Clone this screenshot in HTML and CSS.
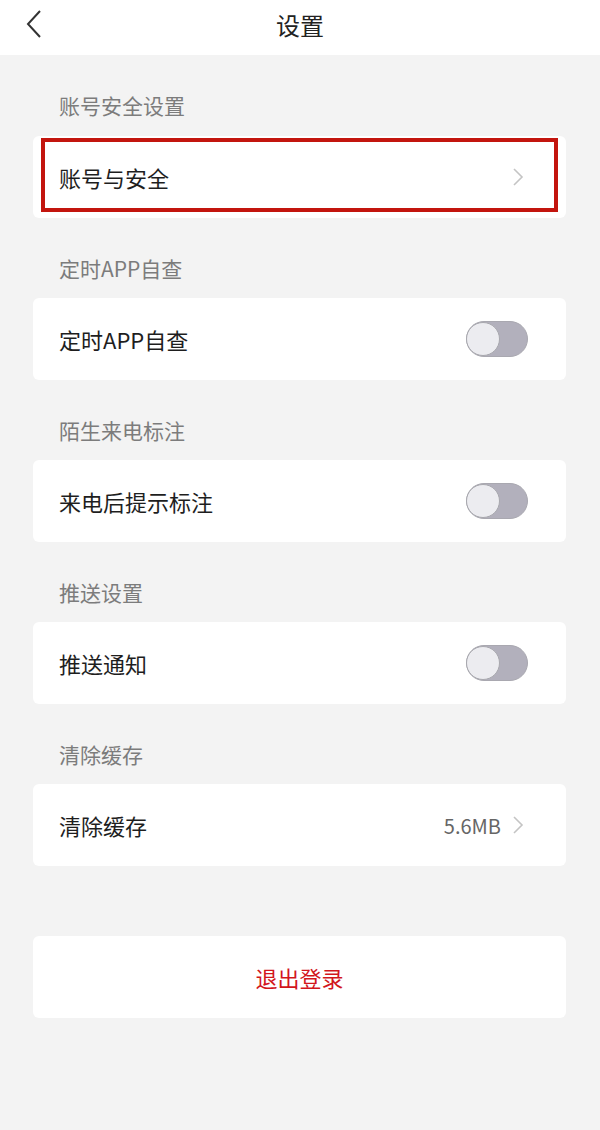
FILE: index.html
```html
<!DOCTYPE html>
<html lang="zh-CN">
<head>
<meta charset="utf-8">
<title>设置</title>
<link rel="stylesheet" href="styles.css">
</head>
<body>
<header class="topbar">
  <svg class="back" width="18" height="30" viewBox="0 0 18 30"><path d="M15 2 L3 15 L15 28" fill="none" stroke="#333" stroke-width="2"/></svg>
  <h1 class="title">设置</h1>
</header>
<main class="content">
  <section class="group">
    <div class="label">账号安全设置</div>
    <div class="card">
      <span class="item">账号与安全</span>
      <svg class="chev" width="12" height="20" viewBox="0 0 12 20"><path d="M2 2 L10 10 L2 18" fill="none" stroke="#c4c4c4" stroke-width="1.6"/></svg>
      <div class="highlight"></div>
    </div>
  </section>
  <section class="group">
    <div class="label">定时APP自查</div>
    <div class="card">
      <span class="item">定时APP自查</span>
      <span class="switch"><span class="knob"></span></span>
    </div>
  </section>
  <section class="group">
    <div class="label">陌生来电标注</div>
    <div class="card">
      <span class="item">来电后提示标注</span>
      <span class="switch"><span class="knob"></span></span>
    </div>
  </section>
  <section class="group">
    <div class="label">推送设置</div>
    <div class="card">
      <span class="item">推送通知</span>
      <span class="switch"><span class="knob"></span></span>
    </div>
  </section>
  <section class="group">
    <div class="label">清除缓存</div>
    <div class="card">
      <span class="item">清除缓存</span>
      <span class="value">5.6MB</span>
      <svg class="chev" width="12" height="20" viewBox="0 0 12 20"><path d="M2 2 L10 10 L2 18" fill="none" stroke="#c4c4c4" stroke-width="1.6"/></svg>
    </div>
  </section>
  <div class="card logout">退出登录</div>
</main>
</body>
</html>
```
FILE: styles.css
```css
* { box-sizing: border-box; }
html, body { margin: 0; padding: 0; }
body {
  width: 600px;
  min-height: 1130px;
  background: #f3f3f3;
  font-family: "Noto Sans CJK SC", "Noto Sans", sans-serif;
}
.topbar {
  height: 55px;
  background: #fff;
  display: flex;
  align-items: center;
  justify-content: center;
  position: relative;
}
.back {
  position: absolute;
  left: 25px;
  top: 9px;
}
.title {
  margin: 0;
  font-size: 24px;
  font-weight: 400;
  color: #222;
  line-height: 30px;
  margin-top: -6px;
}
.content {
  padding: 0 34px 0 33px;
}
.label {
  height: 81px;
  padding: 38px 0 0 26px;
  font-size: 21px;
  line-height: 24px;
  color: #7c7c7c;
  font-weight: 400;
}
.group + .group .label { height: 80px; }
.card {
  position: relative;
  height: 82px;
  background: #fff;
  border-radius: 6px;
  display: flex;
  align-items: center;
  padding: 0 38px 0 26px;
}
.item {
  flex: 1;
  font-size: 22px;
  color: #1e1e1e;
  line-height: 28px;
}
.value {
  font-size: 20px;
  color: #666;
  margin-right: 11px;
}
.chev { display: block; margin-right: 4px; }
.highlight {
  position: absolute;
  left: 8px;
  right: 8px;
  top: 2px;
  bottom: 6px;
  border: 4px solid #c3150e;
}
.switch {
  width: 62px;
  height: 36px;
  border-radius: 18px;
  background: #b2b0bc;
  border: 1px solid #a9a8b0;
  display: flex;
  align-items: center;
}
.knob {
  width: 34px;
  height: 34px;
  border-radius: 50%;
  background: #ececf0;
  border: 1px solid #a8a8ae;
  margin-left: -1px;
}
.logout {
  margin-top: 70px;
  justify-content: center;
  padding: 0;
  font-size: 22px;
  color: #d2161c;
}
```
